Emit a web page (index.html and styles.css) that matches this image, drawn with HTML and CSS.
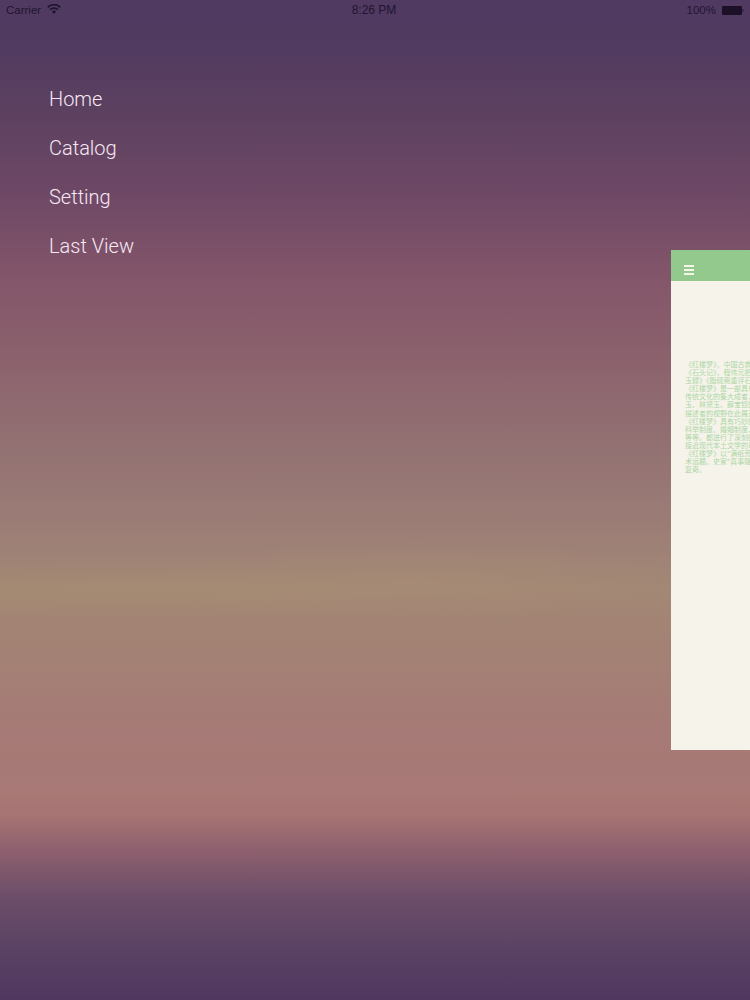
FILE: index.html
```html
<!DOCTYPE html>
<html lang="en">
<head>
<meta charset="utf-8">
<title>Menu</title>
<link rel="stylesheet" href="styles.css">
</head>
<body>
<header class="status">
  <div class="status-left">
    <span>Carrier</span>
    <svg class="wifi" viewBox="0 0 14 10" width="14" height="10"><path d="M7 10 4.9 7.6a3 3 0 0 1 4.2 0zM3.7 6.3 2.5 5a6.4 6.4 0 0 1 9 0l-1.2 1.3a4.7 4.7 0 0 0-6.6 0zM1.4 3.9 0.2 2.6a9.6 9.6 0 0 1 13.6 0l-1.2 1.3a7.9 7.9 0 0 0-11.2 0z"/></svg>
  </div>
  <div class="status-time">8:26 PM</div>
  <div class="status-right">
    <span>100%</span>
    <span class="battery"></span>
  </div>
</header>
<nav class="menu">
  <a class="menu-item">Home</a>
  <a class="menu-item">Catalog</a>
  <a class="menu-item">Setting</a>
  <a class="menu-item">Last View</a>
</nav>
<section class="card">
  <div class="card-bar">
    <svg class="burger" viewBox="0 0 10 10" width="10" height="10"><path d="M0 0h10v2H0zM0 4h10v2H0zM0 8h10v2H0z"/></svg>
  </div>
  <div class="card-body">
    <p>《红楼梦》，中国古典四大名著之首，清代作家曹雪芹创作的章回体长篇小说</p>
    <p>《石头记》，程伟元把前八十回和后四十回合并出版</p>
    <p>玉録》《脂砚斋重评石头记》《金陵十二钗》等</p>
    <p>《红楼梦》是一部具有世界影响力的人情小说</p>
    <p>传统文化的集大成者，小说以贾、史、王、薛四大家族</p>
    <p>玉、林黛玉、薛宝钗的爱情婚姻悲剧为主线</p>
    <p>描述者的视野在此展开，展现人性美和悲剧美</p>
    <p>《红楼梦》具有巧妙的结构和高超的艺术成就</p>
    <p>科举制度、婚姻制度、奴婢制度、等级制度</p>
    <p>等等。都进行了深刻的批判并提出了朦胧的</p>
    <p>接近现代本土文学的审美和思想高度</p>
    <p>《红楼梦》以"满纸荒唐言"的独特方式</p>
    <p>术远题。史家"真事隐去"的手法</p>
    <p>复奇。</p>
  </div>
</section>
</body>
</html>
```
FILE: styles.css
```css
* { box-sizing: border-box; }
html, body { margin: 0; padding: 0; height: 100%; }
body {
  position: relative;
  width: 750px;
  height: 1000px;
  overflow: hidden;
  font-family: Roboto, "Noto Sans", sans-serif;
  background:
    radial-gradient(ellipse 300px 30px at 130px 590px, rgba(170, 145, 110, 0.35), rgba(170, 145, 110, 0)),
    radial-gradient(ellipse 260px 40px at 420px 580px, rgba(172, 145, 118, 0.3), rgba(172, 145, 118, 0)),
    linear-gradient(180deg,
    #503a62 0, #523b60 50px, #5c4060 110px, #6f4966 200px, #84566a 280px,
    #8a5f6c 340px, #927072 440px, #9c7e76 530px, #a38875 590px, #a38174 650px,
    #a67a76 730px, #a87976 790px, #a67472 815px, #8e606e 850px, #6d4e69 895px,
    #5a4264 950px, #4f3760 1000px);
}
.status {
  display: grid;
  grid-template-columns: 1fr auto 1fr;
  align-items: center;
  height: 20px;
  padding: 0 8px 0 6px;
  font-family: "Liberation Sans", Arimo, sans-serif;
  font-size: 11.5px;
  color: #21142f;
}
.status-left { display: flex; align-items: center; gap: 6px; }
.wifi { fill: #21142f; margin-top: -2px; }
.status-time { font-size: 12px; }
.status-right { display: flex; justify-content: flex-end; align-items: center; gap: 6px; }
.battery {
  position: relative;
  display: block;
  width: 20px;
  height: 9px;
  background: #1c1028;
  border-radius: 1px;
}
.battery::after {
  content: "";
  position: absolute;
  right: -2px;
  top: 3px;
  width: 2px;
  height: 3px;
  background: #3d2b50;
}
.menu {
  display: flex;
  flex-direction: column;
  gap: 20px;
  padding: 65px 0 0 49px;
}
.menu-item {
  display: block;
  height: 29px;
  line-height: 29px;
  font-size: 20px;
  font-weight: 300;
  color: #f8e8f4;
}
.card {
  position: absolute;
  left: 671px;
  top: 250px;
  width: 375px;
  height: 500px;
  background: #f6f3ea;
  display: flex;
  flex-direction: column;
}
.card-bar {
  display: flex;
  align-items: flex-end;
  height: 31px;
  padding: 0 0 6px 13px;
  background: #93c98d;
}
.burger { fill: #f4f6ea; }
.card-body {
  padding: 79px 0 0 14px;
  font-family: "Noto Sans CJK SC", sans-serif;
  font-size: 7px;
  line-height: 8.1px;
  color: #abd7a6;
}
.card-body p { margin: 0; white-space: nowrap; }
```
